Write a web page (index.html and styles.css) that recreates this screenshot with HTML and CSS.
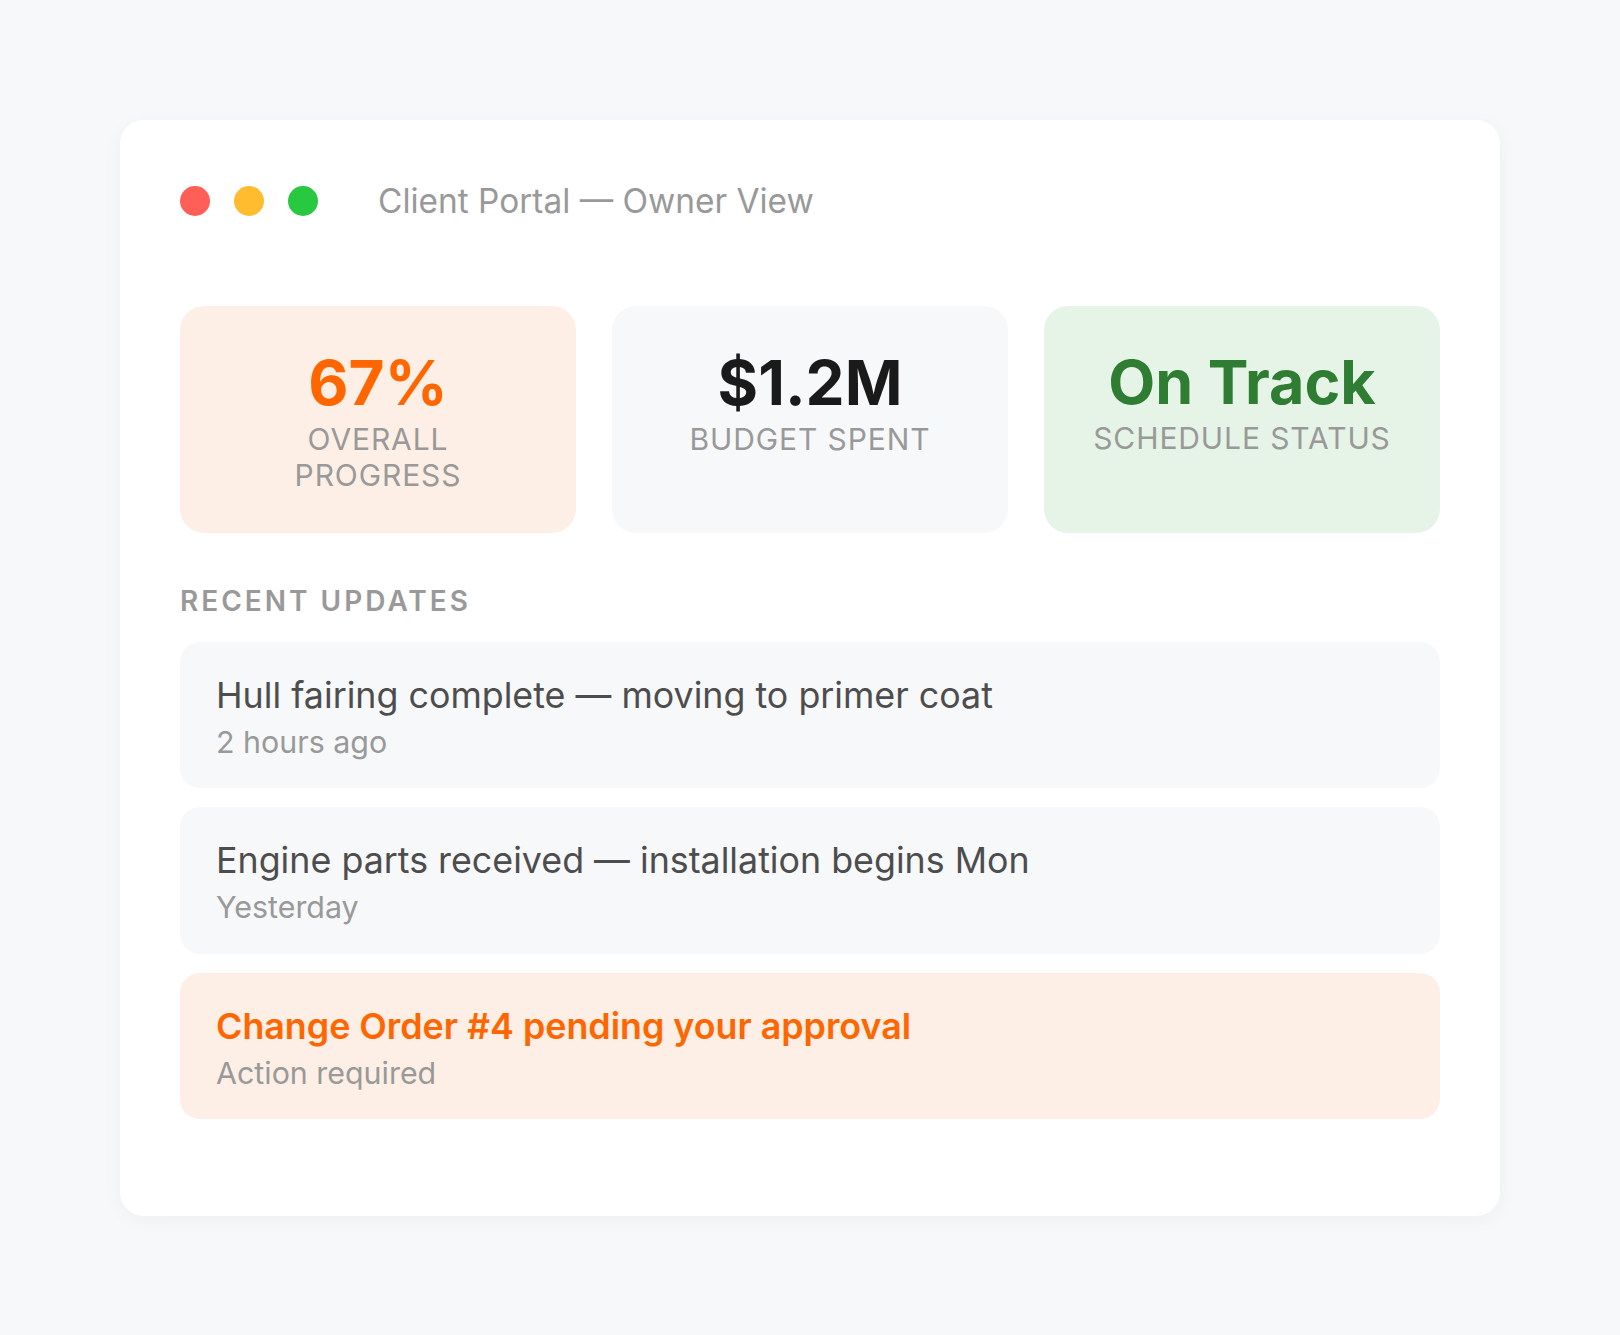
FILE: index.html
```html
<!DOCTYPE html>
<html lang="en">
<head>
<meta charset="utf-8">
<title>Client Portal — Owner View</title>
<link rel="stylesheet" href="styles.css">
</head>
<body>
<div class="page">
  <div class="window">
    <div class="titlebar">
      <div class="dots">
        <span class="dot red"></span>
        <span class="dot yellow"></span>
        <span class="dot green"></span>
      </div>
      <div class="title">Client Portal — Owner View</div>
    </div>
    <div class="stats">
      <div class="stat stat-orange">
        <div class="value value-orange">67%</div>
        <div class="label">OVERALL PROGRESS</div>
      </div>
      <div class="stat stat-gray">
        <div class="value value-dark">$1.2M</div>
        <div class="label">BUDGET SPENT</div>
      </div>
      <div class="stat stat-green">
        <div class="value value-green">On Track</div>
        <div class="label">SCHEDULE STATUS</div>
      </div>
    </div>
    <div class="section-title">RECENT UPDATES</div>
    <div class="updates">
      <div class="update">
        <div class="update-title">Hull fairing complete — moving to primer coat</div>
        <div class="update-meta">2 hours ago</div>
      </div>
      <div class="update">
        <div class="update-title">Engine parts received — installation begins Mon</div>
        <div class="update-meta">Yesterday</div>
      </div>
      <div class="update update-alert">
        <div class="update-title alert-title">Change Order #4 pending your approval</div>
        <div class="update-meta">Action required</div>
      </div>
    </div>
  </div>
</div>
</body>
</html>
```
FILE: styles.css
```css
* { box-sizing: border-box; }
html, body {
  margin: 0;
  padding: 0;
  background: #f7f8fa;
  font-family: "Inter", "Noto Sans", "Liberation Sans", sans-serif;
}
.page {
  padding: 120px;
}
.window {
  background: #ffffff;
  border-radius: 24px;
  padding: 60px 60px 97px;
  box-shadow: 0 4px 20px rgba(0, 0, 0, 0.04);
}
.titlebar {
  display: flex;
  align-items: center;
  min-height: 42px;
}
.dots {
  display: flex;
  gap: 24px;
}
.dot {
  width: 30px;
  height: 30px;
  border-radius: 50%;
  display: block;
}
.red { background: #ff5f57; }
.yellow { background: #febc2e; }
.green { background: #28c840; }
.title {
  margin-left: 60px;
  font-size: 33.4px;
  color: #999999;
  line-height: 1.2;
}
.stats {
  margin-top: 84px;
  display: grid;
  grid-template-columns: repeat(3, 1fr);
  gap: 36px;
}
.stat {
  border-radius: 24px;
  padding: 40px 40px;
  text-align: center;
}
.stat-orange { background: #fdefe5; }
.stat-gray { background: #f7f8fa; }
.stat-green { background: #e6f4e7; }
.value {
  font-size: 62px;
  font-weight: 700;
  line-height: 1.2;
  margin-bottom: 1px;
}
.value-orange { color: #ff6600; }
.value-dark { color: #1a1a1a; }
.value-green { color: #2e7d32; font-size: 61px; }
.label {
  font-size: 30px;
  line-height: 1.2;
  color: #999999;
  letter-spacing: 0.9px;
}
.section-title {
  margin-top: 52px;
  font-size: 28px;
  font-weight: 600;
  line-height: 1.2;
  color: #999999;
  letter-spacing: 3px;
}
.updates {
  margin-top: 23px;
  display: flex;
  flex-direction: column;
  gap: 19px;
}
.update {
  background: #f7f8fa;
  border-radius: 20px;
  padding: 31px 36px 28px;
}
.update-alert { background: #fdefe5; }
.update-title {
  font-size: 35.8px;
  line-height: 44px;
  color: #4d4d4d;
  margin-bottom: 7px;
}
.alert-title {
  color: #ff6600;
  font-weight: 600;
}
.update-meta {
  font-size: 30.4px;
  line-height: 36.4px;
  color: #999999;
}
```
